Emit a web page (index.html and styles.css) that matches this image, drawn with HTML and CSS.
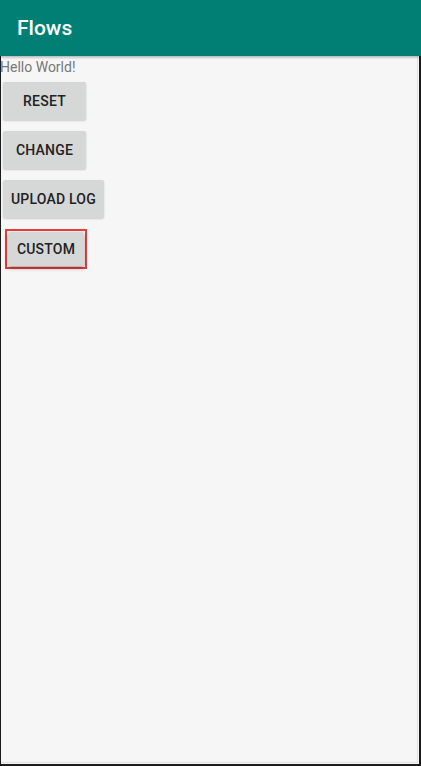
FILE: index.html
```html
<!DOCTYPE html>
<html>
<head>
<meta charset="utf-8">
<link rel="stylesheet" href="styles.css">
</head>
<body>
<div class="frame">
  <header class="appbar"><span class="title">Flows</span></header>
  <main class="content">
    <div class="hello">Hello World!</div>
    <div class="buttons">
      <button class="btn">RESET</button>
      <button class="btn">CHANGE</button>
      <button class="btn">UPLOAD LOG</button>
      <div class="highlight"><button class="btn btn-custom">CUSTOM</button></div>
    </div>
  </main>
</div>
</body>
</html>
```
FILE: styles.css
```css
html, body {
  margin: 0;
  padding: 0;
  width: 421px;
  height: 766px;
  background: #111;
  overflow: hidden;
}
.frame {
  box-sizing: border-box;
  width: 421px;
  height: 766px;
  background: #f6f6f6;
  border-left: 1px solid #1a1a1a;
  border-right: 2px solid #1a1a1a;
  border-bottom: 2px solid #1a1a1a;
  display: flex;
  flex-direction: column;
  position: relative;
  font-family: Roboto, "Liberation Sans", sans-serif;
}
.frame::after {
  content: "";
  position: absolute;
  left: 0; right: 1px; bottom: 1px; top: 56px;
  border-right: 1px solid #e2e2e2;
  border-bottom: 1px solid #e2e2e2;
  pointer-events: none;
}
.appbar {
  height: 56px;
  margin-left: -1px;
  margin-right: -2px;
  background: #027f74;
  display: flex;
  align-items: center;
  padding-left: 17px;
  box-shadow: 0 1px 3px rgba(0,0,0,0.35);
  position: relative;
  z-index: 1;
  flex-shrink: 0;
}
.title {
  color: #fff;
  font-size: 21px;
  font-weight: 500;
}
.content {
  flex: 1;
  margin-left: -1px;
}
.hello {
  font-size: 14px;
  color: #777;
  line-height: 20px;
  margin-top: 1px;
}
.buttons {
  display: flex;
  flex-direction: column;
  align-items: flex-start;
  gap: 11px;
  padding-left: 3px;
  margin-top: 5px;
}
.btn {
  height: 38px;
  min-width: 83px;
  padding: 0 8px;
  border: none;
  border-radius: 2px;
  background: #d6d7d7;
  color: #222;
  font-family: Roboto, "Liberation Sans", sans-serif;
  font-size: 14px;
  font-weight: 500;
  letter-spacing: 0.2px;
  box-shadow: 0 1px 2px rgba(0,0,0,0.18);
}
.highlight {
  margin-left: 2px;
  border: 2px solid #ec3b3b;
  padding: 1px;
  box-sizing: border-box;
  display: flex;
}
.btn-custom {
  height: 34px;
  min-width: 76px;
  padding: 0 7px;
  box-shadow: 0 2px 4px rgba(0,0,0,0.35);
}
```
